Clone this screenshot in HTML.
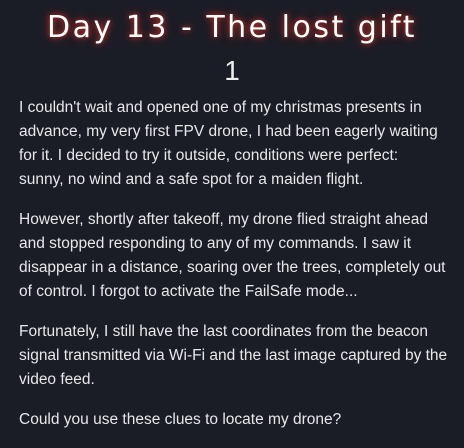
<!DOCTYPE html>
<html><head><meta charset="utf-8"><style>
html,body{margin:0;padding:0;background:#1b1d26;width:464px;height:447px;overflow:hidden}
h1{margin:0;position:absolute;top:8px;left:0;width:464px;text-align:center;font:400 30px/40px "DejaVu Sans","Liberation Sans",sans-serif;letter-spacing:2.5px;color:#fff;text-shadow:0 0 6px #c0392b,0 0 10px #8b1a1a}
.n{position:absolute;top:54px;left:0;width:464px;text-align:center;font:400 28px/34px "Liberation Sans",sans-serif;color:#eee}
.b{position:absolute;top:96px;left:19px;width:445px;font:400 15.5px/24px "Liberation Sans",sans-serif;color:#e8e8ea;white-space:nowrap}
p{margin:0 0 16px}
</style></head><body>
<h1>Day 13 - The lost gift</h1>
<div class="n">1</div>
<div class="b">
<p>I couldn't wait and opened one of my christmas presents in<br>advance, my very first FPV drone, I had been eagerly waiting<br>for it. I decided to try it outside, conditions were perfect:<br>sunny, no wind and a safe spot for a maiden flight.</p>
<p>However, shortly after takeoff, my drone flied straight ahead<br>and stopped responding to any of my commands. I saw it<br>disappear in a distance, soaring over the trees, completely out<br>of control. I forgot to activate the FailSafe mode...</p>
<p>Fortunately, I still have the last coordinates from the beacon<br>signal transmitted via Wi-Fi and the last image captured by the<br>video feed.</p>
<p>Could you use these clues to locate my drone?</p>
</div>
</body></html>
